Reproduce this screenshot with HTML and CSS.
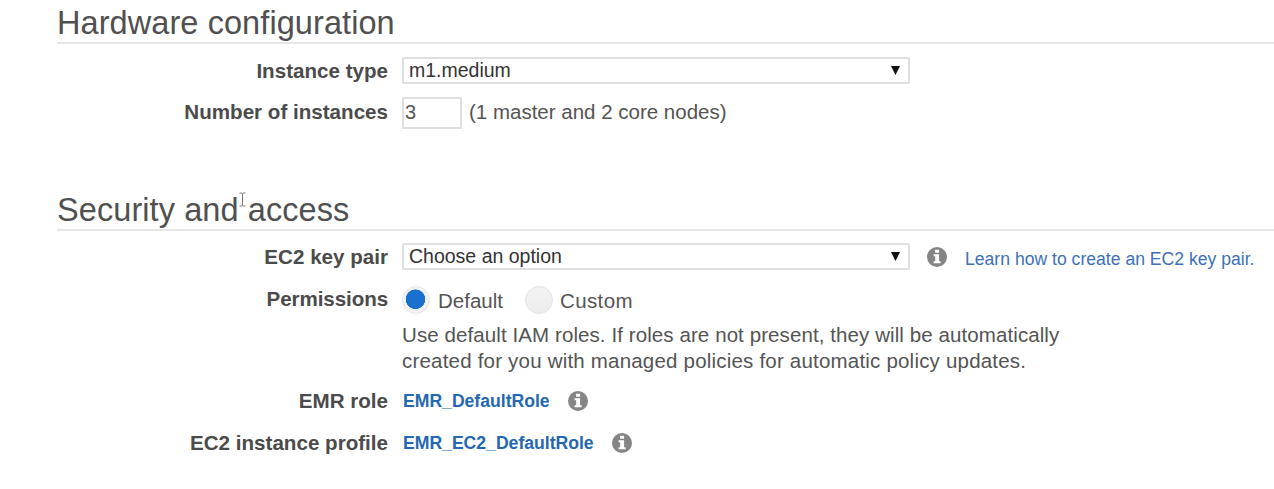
FILE: index.html
```html
<!DOCTYPE html>
<html lang="en">
<head>
<meta charset="utf-8">
<title>Create Cluster</title>
<link rel="stylesheet" href="styles.css">
</head>
<body>
<svg class="defs" width="0" height="0">
  <symbol id="info" viewBox="0 0 20 20">
    <circle cx="10" cy="10" r="10" fill="#858585"/>
    <path d="M8.1 2.700h4v3.100h-4zM6.600 7.300h5.500v6.900h1.500v2H6.600v-2h1.600V9.300H6.600z" fill="#fff"/>
  </symbol>
</svg>
<main class="form">
  <section class="hardware">
    <h2 class="title"><span>Hardware configuration</span></h2>
    <div class="row row-type">
      <span class="label">Instance type</span>
      <div class="select"><span>m1.medium</span><svg class="arrow" viewBox="0 0 9 9"><path d="M0 0h9L4.500 9z"/></svg></div>
    </div>
    <div class="row row-count">
      <span class="label">Number of instances</span>
      <div class="number">3</div>
      <span class="hint">(1 master and 2 core nodes)</span>
    </div>
  </section>
  <section class="security">
    <h2 class="title title-security"><span>Security and access</span>
      <svg class="cursor" viewBox="0 0 7 15"><path d="M.5 1h2l1 .5 1-.5h2M3.500 1.500v12M.5 14h2l1-.5 1 .5h2" fill="none" stroke="#777"/></svg>
    </h2>
    <div class="row row-key">
      <span class="label">EC2 key pair</span>
      <div class="select"><span class="choose">Choose an option</span><svg class="arrow" viewBox="0 0 9 9"><path d="M0 0h9L4.500 9z"/></svg></div>
      <svg class="info info-key"><use href="#info"/></svg>
      <a class="learn">Learn how to create an EC2 key pair.</a>
    </div>
    <div class="row row-permissions">
      <span class="label label-permissions">Permissions</span>
      <span class="radio checked"></span><span class="option">Default</span>
      <span class="radio second"></span><span class="option custom">Custom</span>
    </div>
    <p class="description"><span class="line-one">Use default IAM roles. If roles are not present, they will be automatically</span><br><span class="line-two">created for you with managed policies for automatic policy updates.</span></p>
    <div class="row row-role">
      <span class="label">EMR role</span>
      <a class="role">EMR_DefaultRole</a>
      <svg class="info"><use href="#info"/></svg>
    </div>
    <div class="row row-profile">
      <span class="label">EC2 instance profile</span>
      <a class="role role-ec2">EMR_EC2_DefaultRole</a>
      <svg class="info"><use href="#info"/></svg>
    </div>
  </section>
</main>
</body>
</html>
```
FILE: styles.css
```css
* { box-sizing: border-box; }
body {
  margin: 0;
  height: 489px;
  overflow: hidden;
  background: #fff;
  color: #545454;
  font: 20.5px/26px "Liberation Sans", Arial, sans-serif;
  white-space: nowrap;
}
.defs { display: block; }
.form { padding-left: 57px; }
.hardware { height: 187px; }
.title {
  position: relative;
  margin: 0;
  height: 44px;
  padding-top: 5px;
  border-bottom: 2px solid #e6e6e6;
  font-size: 32.5px;
  font-weight: 400;
  line-height: 37px;
  letter-spacing: .08px;
  color: #505050;
}
.cursor { position: absolute; left: 182px; top: 5px; width: 7px; height: 15px; }
.row { display: flex; align-items: center; height: 42px; }
.row-type { height: 53px; }
.row-count { height: 31px; }
.row-key { height: 51px; }
.row-permissions { height: 37px; }
.label {
  width: 331px;
  margin-right: 14px;
  text-align: right;
  font-weight: 700;
  font-size: 20.6px;
  color: #4b4b4b;
}
.row-count .label, .hint { margin-top: -2px; }
.label-permissions { margin-top: -3px; letter-spacing: -.1px; }
.select {
  display: flex;
  align-items: center;
  justify-content: space-between;
  width: 508px;
  height: 27px;
  padding: 0 8px 0 5px;
  border: 2px solid #dfdfdf;
  border-radius: 2px;
  color: #333;
  font-size: 19.5px;
}
.select span { margin-top: -1px; }
.arrow { width: 9px; height: 9px; fill: #111; }
.number {
  width: 60px;
  height: 32px;
  padding-left: 1px;
  border: 2px solid #dfdfdf;
  font-size: 20px;
}
.hint { margin-left: 7px; }
.info { width: 20px; height: 20px; margin-left: 18px; }
.info-key { margin-left: 17px; }
.learn { margin: 5px 0 0 18px; color: #3c72b8; font-size: 17.6px; }
.radio {
  width: 28px;
  height: 28px;
  margin-top: -1px;
  border: 1px solid #e3e3e3;
  border-radius: 50%;
  background: linear-gradient(#f3f3f3, #ededed);
}
.checked {
  border-color: #e5e7e9;
  background: radial-gradient(circle at 48% 47%, #1b70cf 9.500px, #f0f2f4 10px);
}
.second { margin-left: 22px; }
.option { margin-left: 8px; }
.custom { margin-left: 7px; letter-spacing: .4px; }
.description { margin: 3px 0 0 345px; height: 58px; }
.line-one { letter-spacing: .09px; }
.line-two { letter-spacing: .2px; }
.role { margin-left: 1px; color: #2468b2; font-size: 17.6px; font-weight: 700; }
.row-role .info { margin-left: 18px; }
```
